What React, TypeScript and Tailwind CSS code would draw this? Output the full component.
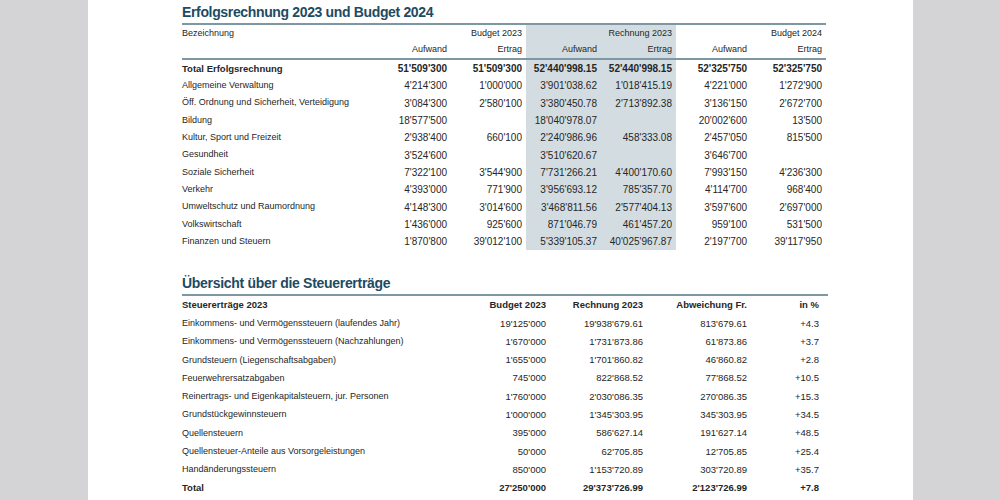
import React from 'react';

// Erfolgsrechnung – Zeilen: Bezeichnung, Budget 2023 (A/E), Rechnung 2023 (A/E), Budget 2024 (A/E)
const erfolgRows: string[][] = [
  ['Allgemeine Verwaltung', "4'214'300", "1'000'000", "3'901'038.62", "1'018'415.19", "4'221'000", "1'272'900"],
  ['Öff. Ordnung und Sicherheit, Verteidigung', "3'084'300", "2'580'100", "3'380'450.78", "2'713'892.38", "3'136'150", "2'672'700"],
  ['Bildung', "18'577'500", '', "18'040'978.07", '', "20'002'600", "13'500"],
  ['Kultur, Sport und Freizeit', "2'938'400", "660'100", "2'240'986.96", "458'333.08", "2'457'050", "815'500"],
  ['Gesundheit', "3'524'600", '', "3'510'620.67", '', "3'646'700", ''],
  ['Soziale Sicherheit', "7'322'100", "3'544'900", "7'731'266.21", "4'400'170.60", "7'993'150", "4'236'300"],
  ['Verkehr', "4'393'000", "771'900", "3'956'693.12", "785'357.70", "4'114'700", "968'400"],
  ['Umweltschutz und Raumordnung', "4'148'300", "3'014'600", "3'468'811.56", "2'577'404.13", "3'597'600", "2'697'000"],
  ['Volkswirtschaft', "1'436'000", "925'600", "871'046.79", "461'457.20", "959'100", "531'500"],
  ['Finanzen und Steuern', "1'870'800", "39'012'100", "5'339'105.37", "40'025'967.87", "2'197'700", "39'117'950"],
];

const steuerRows: string[][] = [
  ['Einkommens- und Vermögenssteuern (laufendes Jahr)', "19'125'000", "19'938'679.61", "813'679.61", '+4.3'],
  ['Einkommens- und Vermögenssteuern (Nachzahlungen)', "1'670'000", "1'731'873.86", "61'873.86", '+3.7'],
  ['Grundsteuern (Liegenschaftsabgaben)', "1'655'000", "1'701'860.82", "46'860.82", '+2.8'],
  ['Feuerwehrersatzabgaben', "745'000", "822'868.52", "77'868.52", '+10.5'],
  ['Reinertrags- und Eigenkapitalsteuern, jur. Personen', "1'760'000", "2'030'086.35", "270'086.35", '+15.3'],
  ['Grundstückgewinnsteuern', "1'000'000", "1'345'303.95", "345'303.95", '+34.5'],
  ['Quellensteuern', "395'000", "586'627.14", "191'627.14", '+48.5'],
  ['Quellensteuer-Anteile aus Vorsorgeleistungen', "50'000", "62'705.85", "12'705.85", '+25.4'],
  ['Handänderungssteuern', "850'000", "1'153'720.89", "303'720.89", '+35.7'],
];

const font = { fontFamily: '"Liberation Sans", Arial, sans-serif' };

function NumCell({ value, shaded, bold, last }: { value: string; shaded?: boolean; bold?: boolean; last?: boolean }) {
  return (
    <div
      className={
        'h-[17.3px] flex items-center justify-end pr-[4px] text-[10px] ' +
        (shaded ? 'bg-[#d3dde1] ' : '') +
        (bold ? 'font-bold ' : '') +
        (last ? '' : '')
      }
    >
      {value}
    </div>
  );
}

export default function App() {
  return (
    <div className="w-[1000px] h-[500px] bg-[#d4d4d6] overflow-hidden flex" style={font}>
      <div className="ml-[88px] w-[825px] h-[500px] bg-white pl-[94px] text-[#262626]">
        {/* Erfolgsrechnung */}
        <h1 className="pt-[4px] h-[23px] text-[14px] leading-[17px] font-bold text-[#1e4a62] tracking-[-0.35px]">
          Erfolgsrechnung 2023 und Budget 2024
        </h1>
        <div className="w-[644px] border-t-2 border-[#7d97a4]">
          <div className="grid grid-cols-[194px_repeat(6,75px)]">
            {/* Kopfzeile 1 */}
            <div className="h-[17px] flex items-center text-[9px]">Bezeichnung</div>
            <div />
            <div className="h-[17px] flex items-center justify-end pr-[4px] text-[9px]">Budget 2023</div>
            <div className="bg-[#d3dde1]" />
            <div className="h-[17px] flex items-center justify-end pr-[4px] text-[9px] bg-[#d3dde1]">Rechnung 2023</div>
            <div />
            <div className="h-[17px] flex items-center justify-end pr-[4px] text-[9px]">Budget 2024</div>
            {/* Kopfzeile 2 */}
            <div className="h-[18px] border-b-2 border-[#7d97a4]" />
            {['Aufwand', 'Ertrag', 'Aufwand', 'Ertrag', 'Aufwand', 'Ertrag'].map((h, i) => (
              <div
                key={i}
                className={
                  'h-[18px] flex items-center justify-end pr-[4px] text-[9px] border-b-2 border-[#7d97a4] ' +
                  (i === 2 || i === 3 ? 'bg-[#d3dde1]' : '')
                }
              >
                {h}
              </div>
            ))}
            {/* Total */}
            <div className="h-[17.3px] flex items-center text-[9.5px] font-bold">Total Erfolgsrechnung</div>
            <NumCell value="51'509'300" bold />
            <NumCell value="51'509'300" bold />
            <NumCell value="52'440'998.15" bold shaded />
            <NumCell value="52'440'998.15" bold shaded />
            <NumCell value="52'325'750" bold />
            <NumCell value="52'325'750" bold />
            {erfolgRows.map((r) => (
              <React.Fragment key={r[0]}>
                <div className="h-[17.3px] flex items-center text-[9px] whitespace-nowrap">{r[0]}</div>
                {r.slice(1).map((v, i) => (
                  <NumCell key={i} value={v} shaded={i === 2 || i === 3} />
                ))}
              </React.Fragment>
            ))}
          </div>
        </div>

        {/* Steuererträge */}
        <h2 className="mt-[25px] h-[19px] text-[14px] leading-[17px] font-bold text-[#1e4a62] tracking-[-0.3px]">
          Übersicht über die Steuererträge
        </h2>
        <div className="w-[646px] border-t-2 border-[#7d97a4]">
          <div className="grid grid-cols-[284px_80px_97px_104px_72px] text-[9.5px]">
            <div className="h-[18.3px] flex items-center font-bold">Steuererträge 2023</div>
            <div className="h-[18.3px] flex items-center justify-end font-bold">Budget 2023</div>
            <div className="h-[18.3px] flex items-center justify-end font-bold">Rechnung 2023</div>
            <div className="h-[18.3px] flex items-center justify-end font-bold">Abweichung Fr.</div>
            <div className="h-[18.3px] flex items-center justify-end font-bold">in %</div>
            {steuerRows.map((r) => (
              <React.Fragment key={r[0]}>
                <div className="h-[18.3px] flex items-center whitespace-nowrap text-[9px]">{r[0]}</div>
                {r.slice(1).map((v, i) => (
                  <div key={i} className="h-[18.3px] flex items-center justify-end">
                    {v}
                  </div>
                ))}
              </React.Fragment>
            ))}
            <div className="h-[18.3px] flex items-center font-bold">Total</div>
            <div className="h-[18.3px] flex items-center justify-end font-bold">27'250'000</div>
            <div className="h-[18.3px] flex items-center justify-end font-bold">29'373'726.99</div>
            <div className="h-[18.3px] flex items-center justify-end font-bold">2'123'726.99</div>
            <div className="h-[18.3px] flex items-center justify-end font-bold">+7.8</div>
          </div>
        </div>
      </div>
    </div>
  );
}
